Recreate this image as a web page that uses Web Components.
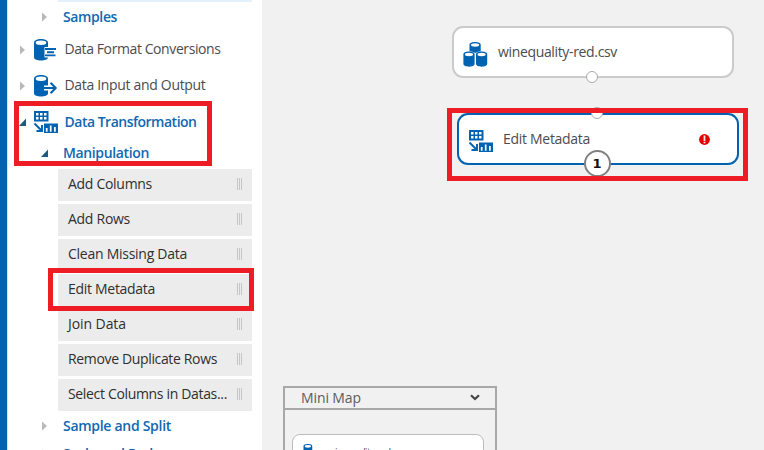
<!DOCTYPE html>
<html lang="en"><head><meta charset="utf-8"><title>Experiment editor</title>
<style>body{margin:0;overflow:hidden;width:764px;height:450px}</style></head>
<body><studio-app></studio-app>
<script>
const define=(name,html,setup)=>customElements.define(name,class extends HTMLElement{
  connectedCallback(){
    if(this.shadowRoot)return;
    const t=document.createElement('template');
    t.innerHTML=typeof html==='function'?html(this):html;
    this.attachShadow({mode:'open'}).append(t.content.cloneNode(true));
    if(setup)setup(this);
  }
});

// A single-line label whose tracking is adjusted to its w attribute.
define('ui-label',e=>`<style>:host{display:block;white-space:pre;flex:none}span{display:inline-block}</style><span>${e.getAttribute('text')}</span>`,e=>{
  const s=e.shadowRoot.querySelector('span'),w=+e.getAttribute('w');
  if(w)s.style.letterSpacing=(w-s.getBoundingClientRect().width)/s.textContent.length+'px';
});

const cylinder=`<path d="M0 3.6v14.8c0 4 14 4 14 0V3.6c0-4.7-14-4.7-14 0z" fill="#0063b1"/><ellipse cx="7" cy="3.7" rx="5.3" ry="2.2" fill="#fff"/>`;
const small=`<path d="M0 2.6v10c0 3.4 11.2 3.4 11.2 0v-10c0-3.5-11.2-3.5-11.2 0z" fill="#0063b1"/><ellipse cx="5.6" cy="3" rx="4.1" ry="1.7" fill="#fff"/>`;
const icons={
  convert:`<svg width="24" height="24"><g transform="translate(0 1)">${cylinder}</g><path d="M10.500 9h12v10.500h-12z" fill="#fff"/><path d="M11 11h11M13 14.200h7M11 17.400h10.500" stroke="#0063b1" stroke-width="1.9"/></svg>`,
  output:`<svg width="24" height="24"><g transform="translate(0 1)">${cylinder}</g><path d="M10 14h12M16.500 8.500l5.500 5.500-5.500 5.500" fill="none" stroke="#fff" stroke-width="5"/><path d="M10 14h12M16.500 8.800l5.200 5.200-5.200 5.200" fill="none" stroke="#0063b1" stroke-width="2"/></svg>`,
  transform:`<svg width="24" height="24"><path d="M0 1h14.500v10.500H0z" fill="#0063b1"/><path d="M2 3h2.500v2.500H2zm4 0h2.500v2.500H6zm4 0h2.500v2.500H10zM2 7h2.500v2.500H2zm4 0h2.500v2.500H6zm4 0h2.500v2.500H10z" fill="#fff"/><path d="M.5 13.500l7 7M8 15v6H2.500" fill="none" stroke="#0063b1" stroke-width="1.9"/><path d="M10 13.500h14V23H10z" fill="#0063b1"/><path d="M12.700 18v3.700M16.700 15.500v6.200M20.900 17v4.700" stroke="#fff" stroke-width="1.700"/></svg>`,
  dataset:`<svg width="25" height="26"><g transform="translate(6.500 0)">${small}</g><path d="M0 12q6-5 12.300-1q6-4 12.700 1v3H0z" fill="#fff"/><g transform="translate(.4 9.500)">${small}</g><g transform="translate(13 9.500)">${small}</g></svg>`
};
define('ui-icon',e=>`<style>:host{display:block;flex:none}svg{display:block;overflow:visible}</style>${icons[e.getAttribute('name')]}`);

define('tree-row',e=>{
  const open=e.hasAttribute('open'),sub=e.hasAttribute('sub'),blue=open||sub;
  return `<style>:host{display:flex;align-items:center;box-sizing:border-box;padding-left:${sub?34:12}px;
  font-size:14px;line-height:20px;color:${blue?'#1068b0':'#4c4c4c'};font-weight:${blue?600:400}}
  .mark{flex:none;width:${sub?22:15}px;display:block}.mark svg{display:block;margin-left:0}ui-icon{margin-right:7px}ui-label{margin:${sub?'0':open?'0 0 0 -.5px':'-2px 0 0 -.5px'}}</style>
  <span class="mark"><svg width="8" height="10">${open?'<path d="M7 1.500V9H0z" fill="#1c5a82"/>':'<path d="M1 .5v9L6 5z" fill="#b9b9b9"/>'}</svg></span>
  ${e.getAttribute('icon')?`<ui-icon name="${e.getAttribute('icon')}"></ui-icon>`:''}
  <ui-label text="${e.getAttribute('text')}" w="${e.getAttribute('w')}"></ui-label>`;
});

define('module-item',e=>`<style>:host{display:flex;align-items:center;justify-content:space-between;height:32px;box-sizing:border-box;padding:0 10px;background:#ececec;color:#2f2f2f;font-size:14px;line-height:20px}
i{display:block;width:1px;height:12px;background:#c6c6c6}.grip{display:flex;gap:1px;margin-bottom:2px}ui-label{margin-top:-2px}</style>
<ui-label text="${e.getAttribute('text')}" w="${e.getAttribute('w')}"></ui-label><span class="grip"><i></i><i></i><i></i></span>`);

define('module-tree',`<style>:host{display:flex;flex-direction:column;background:#fff;overflow:hidden;box-shadow:inset 1px 0 #d9e2ea}
.strip{height:2px;flex:none;margin:0 10px 0 51px;background:#e3f1fc}
.items{display:grid;gap:3px;margin:0 10px 0 51px;flex:none}tree-row{flex:none}</style>
<div class="strip"></div>
<tree-row sub text="Samples" w="54" style="height:30px"></tree-row>
<tree-row icon="convert" text="Data Format Conversions" w="156" style="height:36px"></tree-row>
<tree-row icon="output" text="Data Input and Output" w="141" style="height:36px"></tree-row>
<tree-row open icon="transform" text="Data Transformation" w="132" style="height:35px"></tree-row>
<tree-row sub open text="Manipulation" w="86" style="height:30px;padding-bottom:2px"></tree-row>
<div class="items">
<module-item text="Add Columns" w="84"></module-item><module-item text="Add Rows" w="62"></module-item>
<module-item text="Clean Missing Data" w="119"></module-item><module-item text="Edit Metadata" w="87"></module-item>
<module-item text="Join Data" w="58"></module-item><module-item text="Remove Duplicate Rows" w="149"></module-item>
<module-item text="Select Columns in Datas..." w="159"></module-item></div>
<tree-row sub text="Sample and Split" w="108" style="height:30px"></tree-row>
<tree-row sub text="Scale and Reduce" w="113" style="height:25px"></tree-row>`);

define('flow-node',e=>{const sel=e.hasAttribute('selected');return `<style>:host{display:flex;align-items:center;position:absolute;box-sizing:border-box;width:282px;height:52px;border:2px solid ${sel?'#0063b1':'#cbcbcb'};border-radius:11px;background:#fff;color:#4c4c4c;font-size:14px;line-height:20px}
ui-icon{margin:${sel?'3px 10px 0 10px':'5px 10px 0 9px'}}ui-label{margin-left:0}slot{display:block}</style>
<ui-icon name="${e.getAttribute('icon')}"></ui-icon><ui-label text="${e.getAttribute('text')}" w="${e.getAttribute('w')}"></ui-label><slot></slot>`;});

define('flow-port',`<style>:host{position:absolute;box-sizing:border-box;width:12px;height:12px;border:1.5px solid #aaa;border-radius:50%;background:#fff}</style>`);

define('step-badge',`<style>:host{position:absolute;box-sizing:border-box;width:27px;height:27px;border:2px solid #808080;border-radius:50%;background:#fff;display:flex;align-items:center;justify-content:center;font:700 13px/20px "DejaVu Sans",sans-serif;color:#111}</style><slot></slot>`);

define('error-mark',`<style>:host{position:absolute;width:11px;height:11px}svg{display:block}</style><svg width="11" height="11"><circle cx="5.500" cy="5.500" r="5.400" fill="#e30000"/><path d="M4.600 1.500h1.800v5.500H4.600zM4.600 7.700h1.800v1.500H4.600z" fill="#fff" opacity=".9"/></svg>`);

define('mini-map',`<style>:host{position:absolute;box-sizing:border-box;width:214px;height:90px;border:2px solid #a8a8a8;background:#f1f1f1;color:#5c5c5c;font-size:14px;line-height:20px}
header{display:flex;align-items:center;justify-content:space-between;height:20px;padding:0 15px 0 16px;border-bottom:2px solid #a8a8a8}
header svg{display:block;margin-top:-2px}
.node{box-sizing:border-box;display:flex;align-items:flex-start;margin:24px 11px 0 7px;height:40px;border:1px solid #bdbdbd;border-radius:8px;background:#fff;padding:9px 0 0 9px}
.node ui-label{font-size:10px;margin:-2px 0 0 14px;color:#444}.node svg{display:block}</style>
<header><ui-label text="Mini Map" w="60"></ui-label><svg width="10" height="7"><path d="M1 1.300l4 3.700 4-3.700" fill="none" stroke="#444" stroke-width="2.200"/></svg></header>
<div class="node"><svg width="12" height="20"><g transform="translate(1.500 0) scale(.78)">${small}</g></svg><ui-label text="winequality-red.csv" w="77"></ui-label></div>`);

define('red-frame',`<style>:host{position:absolute;box-sizing:border-box;border:5px solid #ee1c25;pointer-events:none}</style>`);

define('flow-canvas',`<style>:host{display:block;position:relative;background:#f1f1f1;overflow:hidden}</style>
<flow-node icon="dataset" text="winequality-red.csv" w="119" style="left:190px;top:26px"><flow-port style="left:132px;top:43px"></flow-port></flow-node>
<flow-node selected icon="transform" text="Edit Metadata" w="87" style="left:195px;top:113px"><flow-port style="left:132px;top:-8px"></flow-port><error-mark style="left:240px;top:18.500px"></error-mark><step-badge style="left:124.500px;top:35px">1</step-badge></flow-node>
<mini-map style="left:21px;top:386px"></mini-map>`);

define('studio-app',`<style>:host{display:grid;grid-template-columns:7px 255px 1fr;width:764px;height:450px;position:relative;overflow:hidden;font-family:"Open Sans","Noto Sans",sans-serif;background:#f1f1f1}.rail{background:#0063b1}</style>
<div class="rail"></div><module-tree></module-tree><flow-canvas></flow-canvas>
<red-frame style="left:14px;top:101px;width:198px;height:65px"></red-frame>
<red-frame style="left:48px;top:268px;width:206px;height:43px"></red-frame>
<red-frame style="left:447px;top:108px;width:301px;height:73px"></red-frame>`);
</script></body></html>
